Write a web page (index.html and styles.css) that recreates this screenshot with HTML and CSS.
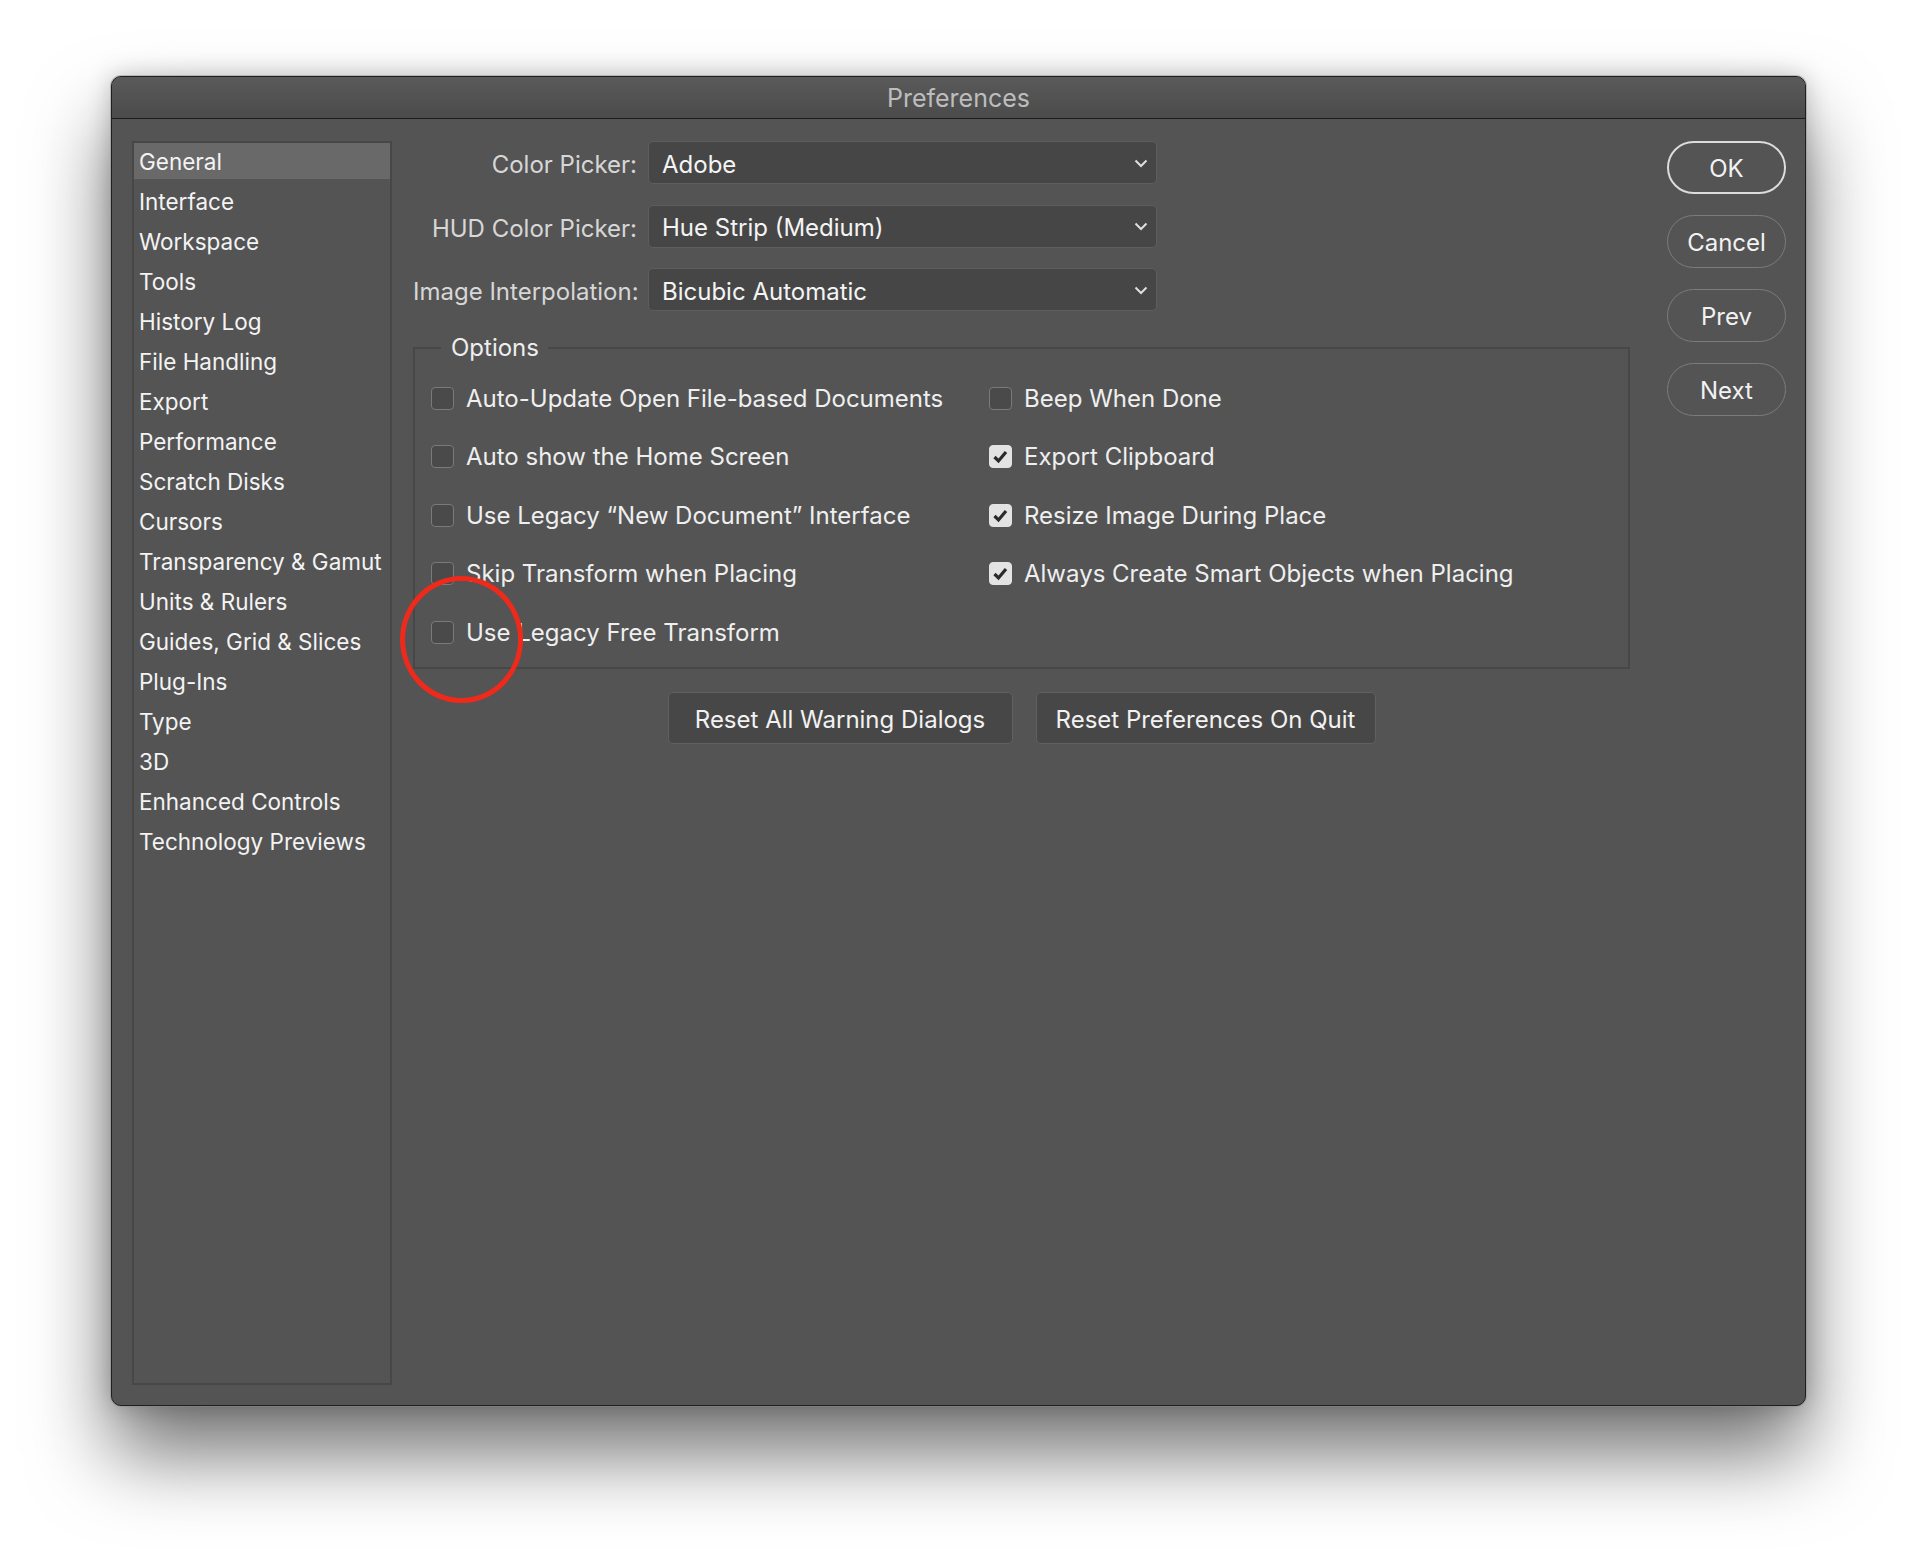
FILE: index.html
```html
<!DOCTYPE html>
<html lang="en">
<head>
<meta charset="utf-8">
<title>Preferences</title>
<link rel="stylesheet" href="styles.css">
</head>
<body>
<div class="window">
  <div class="titlebar">Preferences</div>
  <div class="content">
    <nav class="sidebar">
      <div class="nav-item active">General</div>
      <div class="nav-item">Interface</div>
      <div class="nav-item">Workspace</div>
      <div class="nav-item">Tools</div>
      <div class="nav-item">History Log</div>
      <div class="nav-item">File Handling</div>
      <div class="nav-item">Export</div>
      <div class="nav-item">Performance</div>
      <div class="nav-item">Scratch Disks</div>
      <div class="nav-item">Cursors</div>
      <div class="nav-item">Transparency &amp; Gamut</div>
      <div class="nav-item">Units &amp; Rulers</div>
      <div class="nav-item">Guides, Grid &amp; Slices</div>
      <div class="nav-item">Plug-Ins</div>
      <div class="nav-item">Type</div>
      <div class="nav-item">3D</div>
      <div class="nav-item">Enhanced Controls</div>
      <div class="nav-item">Technology Previews</div>
    </nav>
    <main class="main">
      <div class="pickers">
        <div class="field-label">Color Picker:</div>
        <div class="select"><span>Adobe</span><svg class="chev" width="14" height="9" viewBox="0 0 14 9"><polyline points="1.5,1.5 7,7 12.5,1.5" fill="none" stroke="#dedede" stroke-width="2"/></svg></div>
        <div class="field-label">HUD Color Picker:</div>
        <div class="select"><span>Hue Strip (Medium)</span><svg class="chev" width="14" height="9" viewBox="0 0 14 9"><polyline points="1.5,1.5 7,7 12.5,1.5" fill="none" stroke="#dedede" stroke-width="2"/></svg></div>
        <div class="field-label">Image Interpolation:</div>
        <div class="select"><span>Bicubic Automatic</span><svg class="chev" width="14" height="9" viewBox="0 0 14 9"><polyline points="1.5,1.5 7,7 12.5,1.5" fill="none" stroke="#dedede" stroke-width="2"/></svg></div>
      </div>
      <fieldset class="options">
        <legend>Options</legend>
        <div class="opt-grid">
          <div class="opt"><span class="box"></span>Auto-Update Open File-based Documents</div>
          <div class="opt"><span class="box"></span>Beep When Done</div>
          <div class="opt"><span class="box"></span>Auto show the Home Screen</div>
          <div class="opt"><span class="box checked"><svg width="17" height="17" viewBox="0 0 17 17"><polyline points="2.5,9 6.5,13 14,4" fill="none" stroke="#2a2a2a" stroke-width="3.2"/></svg></span>Export Clipboard</div>
          <div class="opt"><span class="box"></span>Use Legacy “New Document” Interface</div>
          <div class="opt"><span class="box checked"><svg width="17" height="17" viewBox="0 0 17 17"><polyline points="2.5,9 6.5,13 14,4" fill="none" stroke="#2a2a2a" stroke-width="3.2"/></svg></span>Resize Image During Place</div>
          <div class="opt"><span class="box"></span>Skip Transform when Placing</div>
          <div class="opt"><span class="box checked"><svg width="17" height="17" viewBox="0 0 17 17"><polyline points="2.5,9 6.5,13 14,4" fill="none" stroke="#2a2a2a" stroke-width="3.2"/></svg></span>Always Create Smart Objects when Placing</div>
          <div class="opt"><span class="box"></span>Use Legacy Free Transform</div>
        </div>
      </fieldset>
      <div class="reset-row">
        <button class="btn-rect btn-warn">Reset All Warning Dialogs</button>
        <button class="btn-rect btn-quit">Reset Preferences On Quit</button>
      </div>
    </main>
    <aside class="actions">
      <button class="pill default">OK</button>
      <button class="pill">Cancel</button>
      <button class="pill">Prev</button>
      <button class="pill">Next</button>
    </aside>
  </div>
  <div class="annotation"></div>
</div>
</body>
</html>
```

FILE: styles.css
```css
html, body {
  margin: 0;
  padding: 0;
}
body {
  width: 1918px;
  height: 1554px;
  overflow: hidden;
  background: #ffffff;
  font-family: Inter, "Liberation Sans", sans-serif;
  font-size: 24px;
  color: #f2f2f2;
}
.window {
  position: relative;
  box-sizing: border-box;
  width: 1695px;
  height: 1330px;
  margin: 76px 0 0 111px;
  display: flex;
  flex-direction: column;
  background: #545454;
  border: 1px solid #1f1f1f;
  border-radius: 10px;
  box-shadow: 0 0 0 1px rgba(140,140,140,0.45), 0 48px 80px rgba(0,0,0,0.55), 0 0 24px rgba(0,0,0,0.22);
}
.titlebar {
  flex: none;
  height: 42px;
  box-sizing: border-box;
  border-bottom: 1px solid #1c1c1c;
  border-radius: 9px 9px 0 0;
  background: linear-gradient(#5a5a5a, #4b4b4b);
  color: #bdbdbd;
  font-size: 25px;
  display: flex;
  align-items: center;
  justify-content: center;
}
.content {
  flex: 1;
  display: flex;
  padding: 22px 19px 20px 20px;
  min-height: 0;
}
.sidebar {
  flex: none;
  width: 260px;
  box-sizing: border-box;
  border: 2px solid #474747;
  display: flex;
  flex-direction: column;
  gap: 4px;
  font-size: 22.5px;
}
.nav-item {
  height: 36px;
  line-height: 38px;
  padding-left: 5px;
  color: #f3f3f3;
  white-space: nowrap;
}
.nav-item.active {
  background: #696969;
}
.main {
  flex: none;
  width: 1217px;
  margin-left: 21px;
  display: flex;
  flex-direction: column;
}
.pickers {
  display: grid;
  grid-template-columns: 224px 509px;
  grid-auto-rows: 43px;
  column-gap: 11px;
  row-gap: 20.5px;
  align-items: center;
}
.field-label {
  text-align: right;
  color: #d7d7d7;
  white-space: nowrap;
  padding-top: 4px;
}
.select {
  height: 43px;
  box-sizing: border-box;
  background: #464646;
  border: 1.5px solid #5e5e5e;
  border-radius: 5px;
  display: flex;
  align-items: center;
  justify-content: space-between;
  padding: 3px 8px 0 13px;
  color: #f4f4f4;
}
.chev {
  flex: none;
  margin-top: -2px;
}
.options {
  margin: 22.5px 0 0;
  padding: 22.5px 16px 21px;
  border: 2px solid #474747;
  min-width: 0;
}
.options legend {
  margin-left: 10px;
  padding: 0 9px 0 10px;
  line-height: 28px;
  color: #eeeeee;
}
.opt-grid {
  display: grid;
  grid-template-columns: 558px 1fr;
  grid-auto-rows: 28px;
  row-gap: 30.5px;
}
.opt {
  display: flex;
  align-items: center;
  gap: 12px;
  color: #efefef;
  white-space: nowrap;
}
.box {
  flex: none;
  width: 23px;
  height: 23px;
  box-sizing: border-box;
  border: 1.5px solid #7a7a7a;
  border-radius: 4px;
  background: #4a4a4a;
  display: flex;
  align-items: center;
  justify-content: center;
}
.box.checked {
  background: #e3e3e3;
  border-color: #e3e3e3;
}
.reset-row {
  display: flex;
  justify-content: center;
  gap: 23px;
  margin-top: 23px;
}
.btn-rect {
  height: 52px;
  padding: 2px 0 0;
  font: inherit;
  color: #f2f2f2;
  background: #474747;
  border: 1.5px solid #606060;
  border-radius: 5px;
}
.btn-warn {
  width: 345px;
}
.btn-quit {
  width: 340px;
}
.actions {
  flex: none;
  width: 119px;
  margin-left: 37px;
  display: flex;
  flex-direction: column;
  gap: 21px;
}
.pill {
  height: 53px;
  padding-top: 2px;
  font: inherit;
  color: #f2f2f2;
  background: #545454;
  border: 1.5px solid #7c7c7c;
  border-radius: 27px;
}
.pill.default {
  border: 2px solid #dcdcdc;
}
.annotation {
  position: absolute;
  left: 288px;
  top: 499px;
  width: 123px;
  height: 127px;
  box-sizing: border-box;
  border: 5px solid #ef2a1b;
  border-radius: 50%;
}
```
